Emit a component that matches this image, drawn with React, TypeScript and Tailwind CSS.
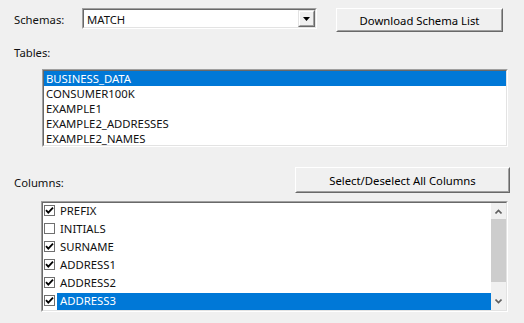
import React from "react";

const font = { fontFamily: '"Noto Sans", "Open Sans", sans-serif' };

function Sunken({ className, children }: { className?: string; children: React.ReactNode }) {
  return (
    <div className={"border border-t-[#a0a0a0] border-l-[#a0a0a0] border-r-white border-b-white " + (className ?? "")}>
      <div className="h-full border border-t-[#696969] border-l-[#696969] border-r-[#e3e3e3] border-b-[#e3e3e3] bg-white overflow-hidden">
        {children}
      </div>
    </div>
  );
}

function Button({ className, children }: { className?: string; children: React.ReactNode }) {
  return (
    <div className={"border border-t-white border-l-white border-r-[#696969] border-b-[#696969] " + (className ?? "")}>
      <div className="h-full flex items-center justify-center border border-t-[#f0f0f0] border-l-[#f0f0f0] border-r-[#a0a0a0] border-b-[#a0a0a0] bg-[#f0f0f0] text-black leading-[15px]">
        {children}
      </div>
    </div>
  );
}

function Chevron({ up }: { up?: boolean }) {
  return (
    <svg width="7" height="5" viewBox="0 0 7 5" className="block">
      <polyline
        points={up ? "0.5,4.5 3.5,1.5 6.5,4.5" : "0.5,0.5 3.5,3.5 6.5,0.5"}
        fill="none"
        stroke="#606060"
        strokeWidth="1.6"
      />
    </svg>
  );
}

const tables = ["BUSINESS_DATA", "CONSUMER100K", "EXAMPLE1", "EXAMPLE2_ADDRESSES", "EXAMPLE2_NAMES"];

const columns = [
  { name: "PREFIX", on: true },
  { name: "INITIALS", on: false },
  { name: "SURNAME", on: true },
  { name: "ADDRESS1", on: true },
  { name: "ADDRESS2", on: true },
  { name: "ADDRESS3", on: true, sel: true },
];

export default function App() {
  return (
    <div className="w-[524px] h-[323px] bg-[#f0f0f0] text-[11.3px] text-[#111] overflow-hidden pt-[8px]" style={font}>
      {/* SCHEMAS ROW */}
      <div className="flex items-start">
        <div className="ml-[14px] w-[68px] mt-[4px] leading-[15px]">Schemas:</div>
        <Sunken className="w-[235px] h-[21px]">
          <div className="flex h-full">
            <div className="flex-1 pl-[3px] pt-[2px] leading-[15px]">MATCH</div>
            <div className="w-[17px] h-full border border-t-[#e3e3e3] border-l-[#e3e3e3] border-r-[#696969] border-b-[#696969]">
              <div className="h-full flex items-center justify-center bg-[#f0f0f0] border border-t-white border-l-white border-r-[#a0a0a0] border-b-[#a0a0a0]">
                <svg width="7" height="4" viewBox="0 0 7 4" className="block">
                  <polygon points="0,0 7,0 3.5,4" fill="#000" />
                </svg>
              </div>
            </div>
          </div>
        </Sunken>
        <Button className="ml-[19px] w-[167px] h-[24px]">Download Schema List</Button>
      </div>

      {/* TABLES */}
      <div className="ml-[14px] mt-[13px] leading-[15px]">Tables:</div>
      <Sunken className="ml-[42px] mt-[9px] w-[466px] h-[78px]">
        {tables.map((t, i) => (
          <div
            key={t}
            className={
              "h-[15px] leading-[15px] pl-[2px] " + (i === 0 ? "bg-[#0078d7] text-white" : "text-[#111]")
            }
          >
            {t}
          </div>
        ))}
      </Sunken>

      {/* COLUMNS ROW */}
      <div className="flex items-start mt-[20px] pr-[14px]">
        <div className="ml-[14px] mt-[8px] leading-[15px]">Columns:</div>
        <Button className="ml-auto w-[215px] h-[26px]">Select/Deselect All Columns</Button>
      </div>

      <Sunken className="ml-[41px] mt-[8px] w-[467px] h-[111px]">
        <div className="flex h-full">
          <div className="flex-1">
            {columns.map((c) => (
              <div key={c.name} className="flex h-[18px]">
                <div className="w-[14px] pl-[1px] pt-[2px]">
                  <div className="w-[11px] h-[11px] border border-[#6f6f6f] bg-white flex items-center justify-center">
                    {c.on && (
                      <svg width="9" height="9" viewBox="0 0 9 9" className="block">
                        <polyline points="1,4.2 3.3,6.6 8,1.6" fill="none" stroke="#000" strokeWidth="1.8" />
                      </svg>
                    )}
                  </div>
                </div>
                <div
                  className={
                    "flex-1 pl-[3px] leading-[15px] " + (c.sel ? "bg-[#0078d7] text-white" : "text-[#111]")
                  }
                >
                  {c.name}
                </div>
              </div>
            ))}
          </div>
          {/* SCROLLBAR */}
          <div className="w-[15px] h-full bg-[#f0f0f0] flex flex-col">
            <div className="h-[16px] flex items-center justify-center">
              <Chevron up />
            </div>
            <div className="h-[63px] bg-[#cdcdcd]" />
            <div className="flex-1" />
            <div className="h-[17px] flex items-center justify-center">
              <Chevron />
            </div>
          </div>
        </div>
      </Sunken>
    </div>
  );
}
